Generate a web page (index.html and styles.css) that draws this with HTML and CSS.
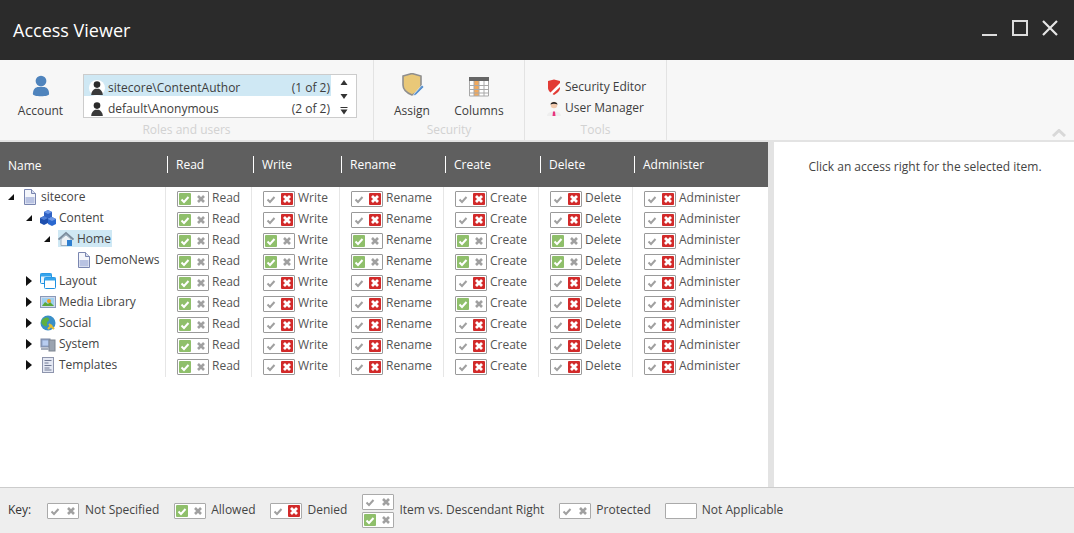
FILE: index.html
```html
<!DOCTYPE html>
<html lang="en">
<head>
<meta charset="utf-8">
<title>Access Viewer</title>
<link rel="stylesheet" href="styles.css">
</head>
<body>
<svg class="sprites" width="0" height="0" aria-hidden="true">
  <symbol id="user" viewBox="0 0 16 18"><circle cx="8" cy="5.500" r="4" fill="#2b2b2b"/><path d="M1 18c0-4 2.500-6.500 5-7.500h4c2.500 1 5 3.500 5 7.500z" fill="#3a3a3a"/></symbol>
  <symbol id="doc" viewBox="0 0 16 16"><path d="M2.500.5h7l4 4v11h-11z" fill="#f4f6fb" stroke="#7a86b0"/><path d="M9.500.5v4h4" fill="#d8def0" stroke="#7a86b0"/><rect x="3.500" y="8" width="9" height="6.500" fill="#b9c3e2"/></symbol>
  <symbol id="cubes" viewBox="0 0 16 16"><path d="M4 2l4-2 4 2v5l-4 2-4-2z" fill="#2f62c4"/><path d="M8 0l4 2-4 2-4-2z" fill="#6d97e6"/><path d="M0 8l4-2 4 2v5l-4 2-4-2z" fill="#1d4fae"/><path d="M4 6l4 2-4 2-4-2z" fill="#4f7fd8"/><path d="M8 9l4-2 4 2v5l-4 2-4-2z" fill="#2a68d0"/><path d="M12 7l4 2-4 2-4-2z" fill="#6d97e6"/></symbol>
  <symbol id="home" viewBox="0 0 16 16"><path d="M3 8l5-4 5 4v6.500H3z" fill="#eef2f6" stroke="#9fb0c0"/><path d="M.5 8.500L8 2l7.500 6.500" fill="none" stroke="#7d8d9d" stroke-width="1.800"/><rect x="9" y="9" width="5" height="6" fill="#2e7fd0"/></symbol>
  <symbol id="layout" viewBox="0 0 16 16"><rect x=".5" y=".5" width="11" height="10" rx="1" fill="#e8f4fd" stroke="#1c8fe0"/><rect x=".5" y=".5" width="11" height="3" fill="#36a4ec"/><rect x="4.500" y="4.500" width="11" height="11" rx="1" fill="#fff" stroke="#1c8fe0"/><rect x="4.500" y="4.500" width="11" height="3" fill="#36a4ec"/></symbol>
  <symbol id="media" viewBox="0 0 16 16"><rect x=".5" y="2.500" width="15" height="11" fill="#cfd9ec" stroke="#8a99b8"/><rect x="2" y="4" width="12" height="8" fill="#9fd0f0"/><path d="M2 12l3-4 3 2 2-2 4 4z" fill="#5aa838"/><circle cx="9" cy="7" r="2" fill="#f0a020"/></symbol>
  <symbol id="globe" viewBox="0 0 16 16"><circle cx="8" cy="8" r="7.500" fill="#3a8fc8"/><path d="M2 5c3-3 6-3 7-1s-3 2-2 5-2 3-4 1-2-3-1-5z" fill="#5fb040"/><path d="M9 9l5 5M8 14l4-4" stroke="#e8c030" stroke-width="2"/></symbol>
  <symbol id="system" viewBox="0 0 16 16"><rect x="1" y="3" width="9" height="8" fill="#8fa3c8" stroke="#7c8aa6"/><rect x="2.500" y="4.500" width="6" height="5" fill="#b8cdf0"/><rect x="9" y="4" width="6" height="11" fill="#9aa3b0" stroke="#7c8490"/><rect x="1" y="12" width="8" height="2" fill="#a6aebb"/></symbol>
  <symbol id="tpl" viewBox="0 0 16 16"><rect x="2.500" y=".5" width="11" height="15" fill="#e4e8f3" stroke="#8e95ad"/><path d="M4.500 3.500h7M4.500 6h4M4.500 8.500h7M4.500 11h5M4.500 13h7" stroke="#727a95"/></symbol>
  <symbol id="open" viewBox="0 0 8 8"><path d="M7 1v6H1z" fill="#111"/></symbol>
  <symbol id="closed" viewBox="0 0 8 10"><path d="M1 0l6 5-6 5z" fill="#111"/></symbol>
</svg>

<header class="titlebar">
  <h1>Access Viewer</h1>
  <div class="winbtns">
    <svg width="16" height="16" viewBox="0 0 16 16"><path d="M0 15h15" stroke="#ddd" stroke-width="2"/></svg>
    <svg width="16" height="16" viewBox="0 0 16 16"><rect x="1" y="1" width="14" height="14" fill="none" stroke="#ddd" stroke-width="2"/></svg>
    <svg width="16" height="16" viewBox="0 0 16 16"><path d="M1 1l14 14M15 1L1 15" stroke="#e6e6e6" stroke-width="2.200"/></svg>
  </div>
</header>

<section class="ribbon">
  <div class="group g-roles">
    <div class="group-body">
      <div class="big account">
        <svg width="18" height="22" viewBox="0 0 20 24"><circle cx="10" cy="6.500" r="6" fill="#4f84bd"/><path d="M1 21c0-5 2-7 5-8h8c3 1 5 3 5 8 0 1.500-4 2.500-9 2.500S1 22.500 1 21z" fill="#4f84bd"/></svg>
        <span>Account</span>
      </div>
      <div class="listbox">
        <ul>
          <li class="sel"><span class="uicon"><svg width="14" height="15"><use href="#user"/></svg></span><span class="uname">sitecore\ContentAuthor</span><span>(1 of 2)</span></li>
          <li><span class="uicon"><svg width="14" height="15"><use href="#user"/></svg></span><span class="uname">default\Anonymous</span><span>(2 of 2)</span></li>
        </ul>
        <div class="scroller">
          <svg width="8" height="7" viewBox="0 0 8 7"><path d="M4 1l3.500 5H.5z" fill="#333"/></svg>
          <svg width="8" height="7" viewBox="0 0 8 7"><path d="M4 6L.5 1h7z" fill="#333"/></svg>
          <svg width="8" height="8" viewBox="0 0 8 8"><path d="M.5 0h7v1h-7zM4 7.500L.5 2.500h7z" fill="#333"/></svg>
        </div>
      </div>
    </div>
    <div class="group-label">Roles and users</div>
  </div>
  <div class="group g-security">
    <div class="group-body">
      <div class="big assign">
        <svg width="24" height="24" viewBox="0 0 24 24"><path d="M2 3l9-2.500L20 3v9c0 5-4 8-9 10-5-2-9-5-9-10z" fill="#e9c878" stroke="#8f8f8f" stroke-width="1.600"/><path d="M13 21l8-9 2 2-8 8-3 1z" fill="#5c93cf" stroke="#fff" stroke-width=".6"/></svg>
        <span>Assign</span>
      </div>
      <div class="big columns">
        <svg width="20" height="20" viewBox="0 0 20 20"><rect width="20" height="19" fill="#fff"/><rect width="20" height="4" fill="#666"/><rect x="5" y="4" width="5" height="15" fill="#f2a95c"/><path d="M.5 4v15h19V4M5 4v15M10 4v15M15 4v15M0 8.500h20M0 12.500h20M0 16h20" fill="none" stroke="#a8a8a8"/></svg>
        <span>Columns</span>
      </div>
    </div>
    <div class="group-label">Security</div>
  </div>
  <div class="group g-tools">
    <div class="group-body tools">
      <div class="small">
        <svg width="14" height="16" viewBox="0 0 14 16"><path d="M1 2l6-1.500L13 2v7c0 3-3 5-6 7-3-2-6-4-6-7z" fill="#e23b35"/><path d="M13 4L3 14l2 1.500L13 8z" fill="#fff"/></svg>
        <span>Security Editor</span>
      </div>
      <div class="small user-mgr">
        <svg width="16" height="16" viewBox="0 0 16 16"><path d="M1 16c0-3 3-4.500 7-4.500s7 1.500 7 4.500z" fill="#eee"/><path d="M7 11.500h2l.5 4.500h-3z" fill="#e8357e"/><circle cx="8" cy="5" r="3.300" fill="#f1c9ad"/><path d="M4.500 4.500C4.500 1 11.500 1 11.500 4.500 9.500 3.500 6.500 3.500 4.500 4.500z" fill="#222"/></svg>
        <span>User Manager</span>
      </div>
    </div>
    <div class="group-label">Tools</div>
  </div>
  <svg class="collapse" width="14" height="8" viewBox="0 0 14 8"><path d="M1 7l6-5.500L13 7" fill="none" stroke="#d8d8d8" stroke-width="3"/></svg>
</section>

<main class="content">
  <div class="grid-pane">
    <table class="rights">
      <colgroup><col class="c-name"><col class="c-read"><col class="c-write"><col class="c-rename"><col class="c-create"><col class="c-delete"><col class="c-admin"></colgroup>
      <thead>
        <tr>
          <th class="th-name">Name</th>
          <th><span>Read</span></th>
          <th><span>Write</span></th>
          <th><span>Rename</span></th>
          <th><span>Create</span></th>
          <th><span>Delete</span></th>
          <th><span>Administer</span></th>
        </tr>
      </thead>
      <tbody>
        <tr>
          <td class="name lvl0"><svg class="tg"><use href="#open"/></svg><svg class="ic"><use href="#doc"/></svg><span>sitecore</span></td>
          <td><i class="r a"></i>Read</td><td><i class="r d"></i>Write</td><td><i class="r d"></i>Rename</td><td><i class="r d"></i>Create</td><td><i class="r d"></i>Delete</td><td><i class="r d"></i>Administer</td>
        </tr>
        <tr>
          <td class="name lvl1"><svg class="tg"><use href="#open"/></svg><svg class="ic"><use href="#cubes"/></svg><span>Content</span></td>
          <td><i class="r a"></i>Read</td><td><i class="r d"></i>Write</td><td><i class="r d"></i>Rename</td><td><i class="r d"></i>Create</td><td><i class="r d"></i>Delete</td><td><i class="r d"></i>Administer</td>
        </tr>
        <tr>
          <td class="name lvl2"><svg class="tg"><use href="#open"/></svg><span class="hl"><svg class="ic"><use href="#home"/></svg><span>Home</span></span></td>
          <td><i class="r a"></i>Read</td><td><i class="r a"></i>Write</td><td><i class="r a"></i>Rename</td><td><i class="r a"></i>Create</td><td><i class="r a"></i>Delete</td><td><i class="r d"></i>Administer</td>
        </tr>
        <tr>
          <td class="name lvl3"><svg class="ic"><use href="#doc"/></svg><span>DemoNews</span></td>
          <td><i class="r a"></i>Read</td><td><i class="r a"></i>Write</td><td><i class="r a"></i>Rename</td><td><i class="r a"></i>Create</td><td><i class="r a"></i>Delete</td><td><i class="r d"></i>Administer</td>
        </tr>
        <tr>
          <td class="name lvl1"><svg class="tg tc"><use href="#closed"/></svg><svg class="ic"><use href="#layout"/></svg><span>Layout</span></td>
          <td><i class="r a"></i>Read</td><td><i class="r d"></i>Write</td><td><i class="r d"></i>Rename</td><td><i class="r d"></i>Create</td><td><i class="r d"></i>Delete</td><td><i class="r d"></i>Administer</td>
        </tr>
        <tr>
          <td class="name lvl1"><svg class="tg tc"><use href="#closed"/></svg><svg class="ic"><use href="#media"/></svg><span>Media Library</span></td>
          <td><i class="r a"></i>Read</td><td><i class="r d"></i>Write</td><td><i class="r d"></i>Rename</td><td><i class="r a"></i>Create</td><td><i class="r d"></i>Delete</td><td><i class="r d"></i>Administer</td>
        </tr>
        <tr>
          <td class="name lvl1"><svg class="tg tc"><use href="#closed"/></svg><svg class="ic"><use href="#globe"/></svg><span>Social</span></td>
          <td><i class="r a"></i>Read</td><td><i class="r d"></i>Write</td><td><i class="r d"></i>Rename</td><td><i class="r d"></i>Create</td><td><i class="r d"></i>Delete</td><td><i class="r d"></i>Administer</td>
        </tr>
        <tr>
          <td class="name lvl1"><svg class="tg tc"><use href="#closed"/></svg><svg class="ic"><use href="#system"/></svg><span>System</span></td>
          <td><i class="r a"></i>Read</td><td><i class="r d"></i>Write</td><td><i class="r d"></i>Rename</td><td><i class="r d"></i>Create</td><td><i class="r d"></i>Delete</td><td><i class="r d"></i>Administer</td>
        </tr>
        <tr>
          <td class="name lvl1"><svg class="tg tc"><use href="#closed"/></svg><svg class="ic"><use href="#tpl"/></svg><span>Templates</span></td>
          <td><i class="r a"></i>Read</td><td><i class="r d"></i>Write</td><td><i class="r d"></i>Rename</td><td><i class="r d"></i>Create</td><td><i class="r d"></i>Delete</td><td><i class="r d"></i>Administer</td>
        </tr>
      </tbody>
    </table>
  </div>
  <aside class="detail">Click an access right for the selected item.</aside>
</main>

<footer class="legend">
  <span class="key">Key:</span>
  <span class="lg l1"><i class="r"></i>Not Specified</span>
  <span class="lg"><i class="r a"></i>Allowed</span>
  <span class="lg"><i class="r d"></i>Denied</span>
  <span class="lg"><span class="stack"><i class="r"></i><i class="r a"></i></span>Item vs. Descendant Right</span>
  <span class="lg"><i class="r"></i>Protected</span>
  <span class="lg l6"><i class="r none"></i>Not Applicable</span>
</footer>
</body>
</html>
```

FILE: styles.css
```css
* { box-sizing: border-box; }
html, body { margin: 0; height: 100%; }
body {
  display: flex;
  flex-direction: column;
  height: 533px;
  overflow: hidden;
  font: 12px/16px "Open Sans", sans-serif;
  color: #3d3d3d;
  background: #fff;
}
.sprites { display: block; height: 0; width: 0; }

/* title */
.titlebar {
  flex: 0 0 60px;
  display: flex;
  align-items: center;
  justify-content: space-between;
  padding: 0 16px 0 13px;
  background: #2b2b2b;
  color: #fff;
}
.titlebar h1 { margin: 0; font: 400 18px/24px "Open Sans", sans-serif; }
.winbtns { display: flex; gap: 14px; margin-top: -4px; }

/* ribbon */
.ribbon {
  flex: 0 0 82px;
  display: flex;
  background: #f7f7f7;
  border-bottom: 2px solid #e3e3e3;
}
.group {
  display: flex;
  flex-direction: column;
  border-right: 1px solid #e3e3e3;
}
.group-body { flex: 1; display: flex; }
.group-label {
  flex: 0 0 16px;
  margin-bottom: 2px;
  text-align: center;
  color: #d2d2d2;
}
.g-roles { width: 374px; }
.g-security { width: 151px; }
.g-tools { width: 142px; }
.big {
  display: flex;
  flex-direction: column;
  align-items: center;
  justify-content: flex-end;
  height: 59px;
}
.account { width: 45px; margin-left: 18px; }
.account svg { margin-bottom: 6px; }
.listbox {
  display: flex;
  width: 274px;
  height: 44px;
  margin: 14px 0 0 20px;
  border: 1px solid #ccc;
  background: #fff;
}
.listbox ul { flex: 1; margin: 0; padding: 0; list-style: none; overflow: hidden; }
.listbox li {
  display: flex;
  align-items: center;
  height: 21px;
  padding: 4px 1px 0 5px;
}
.listbox li.sel { background: #cfe8f4; }
.uicon {
  display: flex;
  align-items: center;
  justify-content: center;
  width: 16px;
  height: 16px;
  margin-right: 3px;
  border-radius: 50%;
}
.sel .uicon { background: #fff; }
.uname { flex: 1; }
.scroller {
  flex: 0 0 25px;
  display: flex;
  flex-direction: column;
  align-items: center;
  justify-content: space-between;
  padding: 4px 0 2px;
}
.assign { width: 38px; margin-left: 19px; }
.assign svg { margin: 0 0 6px 2px; }
.columns { width: 50px; margin-left: 23px; }
.columns svg { margin-bottom: 6px; }
.tools { flex-direction: column; padding: 19px 0 0 22px; gap: 5px; }
.small { display: flex; align-items: center; gap: 4px; height: 16px; }
.user-mgr svg { margin: 0 -1px; }
.collapse { margin: 69px 0 0 385px; }

/* main */
.content { flex: 1; display: flex; min-height: 0; }
.grid-pane { flex: 0 0 774px; border-right: 6px solid #e3e3e3; }
.rights {
  width: 768px;
  border-collapse: separate;
  border-spacing: 0;
  table-layout: fixed;
}
.c-name { width: 166px; }
.c-read { width: 86px; }
.c-write { width: 88px; }
.c-rename { width: 104px; }
.c-create { width: 95px; }
.c-delete { width: 94px; }
.c-admin { width: 135px; }
.rights thead th {
  height: 45px;
  padding: 0 0 0 1px;
  background: #5f5f5f;
  color: #fff;
  font-weight: 400;
  text-align: left;
}
.rights thead th span {
  display: block;
  height: 17px;
  padding-left: 8px;
  border-left: 1px solid #fff;
  line-height: 18px;
}
.rights thead th.th-name { padding: 2px 0 0 8px; }
.rights td {
  height: 21px;
  padding: 3px 0 0 11px;
  border-right: 1px solid #e6e6e6;
  line-height: 16px;
  white-space: nowrap;
  color: #555;
  vertical-align: top;
}
.rights tbody tr:last-child td { height: 22px; }
.rights td.name {
  padding-top: 1px;
  padding-right: 0;
  padding-bottom: 0;
  color: #444;
}
.rights td:last-child { border-right: 0; }
.name svg, .name span { vertical-align: middle; }
.tg { width: 8px; height: 8px; margin-right: 7px; }
.tg.tc { height: 10px; }
.ic { width: 16px; height: 16px; margin-right: 3px; }
.rights td.lvl0 { padding-left: 7px; }
.rights td.lvl1 { padding-left: 25px; }
.rights td.lvl2 { padding-left: 43px; }
.rights td.lvl3 { padding-left: 76px; }
.hl {
  display: inline-block;
  height: 17px;
  padding-right: 1px;
  background: #cfe8f4;
}

/* right box */
.r {
  display: inline-flex;
  justify-content: space-between;
  width: 32px;
  height: 16px;
  padding: 1px;
  margin-right: 3px;
  border: 1px solid #9a9a9a;
  border-radius: 1px;
  background: #fff;
  vertical-align: middle;
}
.r::before, .r::after {
  content: "";
  width: 12px;
  height: 12px;
  background-repeat: no-repeat;
  background-position: center;
}
.r::before {
  background-image: url("data:image/svg+xml,%3Csvg xmlns='http://www.w3.org/2000/svg' width='12' height='12'%3E%3Cpath d='M2.500 6.500l2.500 2.500 4.500-5' fill='none' stroke='%23a0a0a0' stroke-width='2'/%3E%3C/svg%3E");
}
.r::after {
  background-image: url("data:image/svg+xml,%3Csvg xmlns='http://www.w3.org/2000/svg' width='12' height='12'%3E%3Cpath d='M3 3l6 6M9 3l-6 6' fill='none' stroke='%23a0a0a0' stroke-width='2.600'/%3E%3C/svg%3E");
}
.r.a::before {
  border-radius: 1px;
  background-color: #8fbf6b;
  background-image: url("data:image/svg+xml,%3Csvg xmlns='http://www.w3.org/2000/svg' width='12' height='12'%3E%3Cpath d='M2.500 6.500l2.500 2.500 4.500-5' fill='none' stroke='%23fff' stroke-width='2'/%3E%3C/svg%3E");
}
.r.d::after {
  border-radius: 1px;
  background-color: #d22a2a;
  background-image: url("data:image/svg+xml,%3Csvg xmlns='http://www.w3.org/2000/svg' width='12' height='12'%3E%3Cpath d='M3 3l6 6M9 3l-6 6' fill='none' stroke='%23fff' stroke-width='2.800'/%3E%3C/svg%3E");
}
.r.none::before, .r.none::after { background-image: none; }

/* legend */
.legend {
  flex: 0 0 46px;
  display: flex;
  align-items: center;
  gap: 15px;
  padding: 0 0 1px 8px;
  background: #eee;
  border-top: 1px solid #ccc;
  color: #444;
}
.legend .r { border-color: #aaa; margin: 1px 5px 0 0; }
.lg { display: inline-flex; align-items: center; }
.key { width: 24px; color: #333; }
.l1 .r { margin-right: 6px; }
.l6 { margin-left: -1px; }
.stack { display: flex; flex-direction: column; gap: 2px; margin-top: 1px; }
.legend .stack .r { margin-top: 0; }

/* detail */
.detail {
  flex: 1;
  padding: 17px 0 0 2px;
  text-align: center;
  color: #444;
}
```
